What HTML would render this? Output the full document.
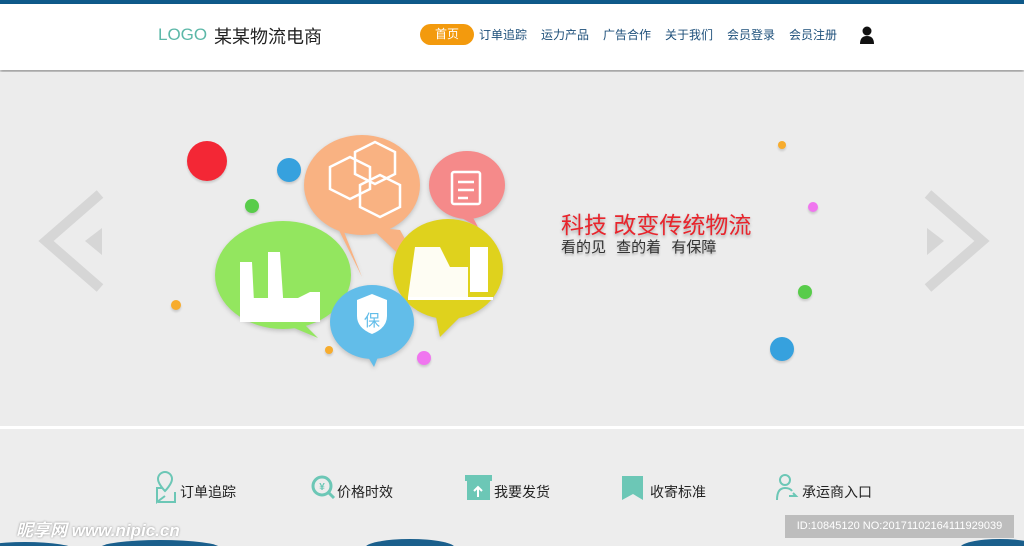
<!DOCTYPE html>
<html><head><meta charset="utf-8"><style>
*{margin:0;padding:0;box-sizing:border-box}
body{width:1024px;height:546px;overflow:hidden;background:#ededed;font-family:"Liberation Sans","Noto Sans CJK SC",sans-serif;position:relative}
.top{position:absolute;left:0;top:0;width:1024px;height:4px;background:#0f5a8a}
.hdr{position:absolute;left:0;top:4px;width:1024px;height:66px;background:#fff;box-shadow:0 2px 3px rgba(0,0,0,.35)}
.logo{position:absolute;left:158px;top:21px;font-size:17px;color:#5cb8a8}
.brand{position:absolute;left:214px;top:19px;font-size:18px;color:#222}
.nav{position:absolute;top:22px;font-size:12px;color:#1d4f7a}
.home{position:absolute;left:420px;top:20px;width:54px;height:21px;border-radius:11px;background:#f39a0d;color:#fff;font-size:12px;text-align:center;line-height:21px}
.banner{position:absolute;left:0;top:72px;width:1024px;height:354px;background:#ececec}
.line{position:absolute;left:0;top:426px;width:1024px;height:3px;background:#fff}
.dot{position:absolute;border-radius:50%;box-shadow:0 2px 2px rgba(0,0,0,.15)}
.t1{position:absolute;left:561px;top:206px;font-size:23px;color:#e8242c;text-shadow:0 2px 3px rgba(0,0,0,.3)}
.t2{position:absolute;left:561px;top:236px;font-size:15px;color:#333;text-shadow:0 2px 2px rgba(0,0,0,.25);word-spacing:6px}
.fi{position:absolute;top:482px;font-size:14px;color:#222}
.wm{position:absolute;left:785px;top:515px;width:229px;height:23px;background:#bdbdbd;color:#fff;font-size:11px;line-height:23px;text-align:center}
.nip{position:absolute;left:16px;top:516px;font-size:17px;font-weight:bold;font-style:italic;color:#fff;text-shadow:0 0 2px #888}
</style></head><body>
<div class="top"></div>
<div class="hdr">
<div class="logo">LOGO</div><div class="brand">某某物流电商</div>
<div class="home">首页</div>
<div class="nav" style="left:479px">订单追踪</div>
<div class="nav" style="left:541px">运力产品</div>
<div class="nav" style="left:603px">广告合作</div>
<div class="nav" style="left:665px">关于我们</div>
<div class="nav" style="left:727px">会员登录</div>
<div class="nav" style="left:789px">会员注册</div>
<svg style="position:absolute;left:859px;top:22px" width="16" height="18"><circle cx="8" cy="5" r="4.5" fill="#111"/><path d="M1 18 Q1 10 8 10 Q15 10 15 18Z" fill="#111"/></svg>
</div>
<div class="banner"></div>
<svg style="position:absolute;left:0;top:72px" width="1024" height="354">
<g fill="none" stroke="#d6d6d6" stroke-width="10"><path d="M100 122 L46 169 L100 216"/><path d="M928 122 L982 169 L928 216"/></g>
<g fill="#d6d6d6"><path d="M85 169 L102 156 L102 183Z"/><path d="M944 169 L927 156 L927 183Z"/></g>
<g style="filter:drop-shadow(0 2px 2px rgba(0,0,0,.18))">
<path d="M330 140 L362 205 L340 150Z" fill="#f9b282"/>
<ellipse cx="362" cy="113" rx="58" ry="50" fill="#f9b282"/>
<path d="M370 155 L430 212 L400 158Z" fill="#f9b282"/>
<ellipse cx="467" cy="113" rx="38" ry="34" fill="#f58a8a"/>
<path d="M470 140 L478 155 L458 144Z" fill="#f58a8a"/>
<ellipse cx="283" cy="203" rx="68" ry="54" fill="#93e65f"/>
<path d="M280 250 L318 266 L300 248Z" fill="#93e65f"/>
<ellipse cx="448" cy="197" rx="55" ry="50" fill="#dfd21d"/>
<path d="M435 240 L440 265 L465 240Z" fill="#dfd21d"/>
<ellipse cx="372" cy="250" rx="42" ry="37" fill="#62bde9"/>
<path d="M365 280 L374 295 L380 280Z" fill="#62bde9"/>
</g>
<g fill="none" stroke="#fff" stroke-width="2.5">
<path d="M330 95 l20 -10 l20 10 l0 22 l-20 10 l-20 -10z M355 80 l20 -10 l20 10 l0 22 l-20 10 l-20 -10z M360 113 l20 -10 l20 10 l0 22 l-20 10 l-20 -10z"/>
<rect x="452" y="100" width="28" height="32" rx="2"/><path d="M458 110h16M458 118h16M458 126h10"/>
</g>
<g fill="#fff">
<path d="M240 190h12l3 60h-15zM268 180h12l4 60h-16zM250 250l60 -30h10v30z" />
<rect x="240" y="226" width="80" height="24"/>
<path d="M415 175h25l10 20h18v30h-60z" opacity=".95"/><rect x="470" y="175" width="18" height="45"/><rect x="408" y="225" width="85" height="3"/>
<path d="M357 228l15 -6 15 6v16q0 12 -15 18q-15 -6 -15 -18z"/>
</g>
<text x="372" y="254" font-size="16" fill="#62bde9" text-anchor="middle" font-family="Noto Sans CJK SC">保</text>
</svg>
<div class="dot" style="left:187px;top:141px;width:40px;height:40px;background:#f32735"></div>
<div class="dot" style="left:277px;top:158px;width:24px;height:24px;background:#36a1de"></div>
<div class="dot" style="left:245px;top:199px;width:14px;height:14px;background:#58cc4a"></div>
<div class="dot" style="left:171px;top:300px;width:10px;height:10px;background:#f7ac2d"></div>
<div class="dot" style="left:325px;top:346px;width:8px;height:8px;background:#f7ac2d"></div>
<div class="dot" style="left:417px;top:351px;width:14px;height:14px;background:#f076ef"></div>
<div class="dot" style="left:778px;top:141px;width:8px;height:8px;background:#f7ac2d"></div>
<div class="dot" style="left:808px;top:202px;width:10px;height:10px;background:#f076ef"></div>
<div class="dot" style="left:798px;top:285px;width:14px;height:14px;background:#58cc4a"></div>
<div class="dot" style="left:770px;top:337px;width:24px;height:24px;background:#36a1de"></div>
<div class="t1">科技 改变传统物流</div>
<div class="t2">看的见 查的着 有保障</div>
<div class="line"></div>
<svg style="position:absolute;left:0;top:470px" width="1024" height="40">
<g fill="none" stroke="#6cc7b6" stroke-width="2"><path d="M165 26l-8 6v-14h6M165 2a7 7 0 0 1 7 7c0 5 -7 12 -7 12s-7 -7 -7 -12a7 7 0 0 1 7 -7z M175 22v10h-17"/>
<circle cx="322" cy="16" r="9" stroke-width="3"/><path d="M329 23l5 5" stroke-width="3"/>
<circle cx="785" cy="10" r="5"/><path d="M777 30q0 -12 8 -12q5 0 7 3M789 26h7l-3 -3"/></g>
<g fill="#6cc7b6"><rect x="467" y="10" width="23" height="20"/><rect x="465" y="5" width="27" height="6"/>
<path d="M622 6h21v24l-10 -6l-11 6z"/></g>
<path d="M478 27v-9M474 21l4 -4l4 4" stroke="#fff" stroke-width="2" fill="none"/>
<text x="322" y="20" font-size="10" fill="#6cc7b6" text-anchor="middle" font-weight="bold">¥</text>
</svg>
<div class="fi" style="left:180px">订单追踪</div>
<div class="fi" style="left:337px">价格时效</div>
<div class="fi" style="left:494px">我要发货</div>
<div class="fi" style="left:650px">收寄标准</div>
<div class="fi" style="left:802px">承运商入口</div>
<svg style="position:absolute;left:0;top:536px" width="1024" height="10"><g fill="#1a5f8c"><ellipse cx="160" cy="12" rx="60" ry="8"/><ellipse cx="410" cy="12" rx="45" ry="9"/><ellipse cx="1000" cy="12" rx="40" ry="9"/><ellipse cx="25" cy="14" rx="50" ry="8"/></g></svg>
<div class="nip">昵享网 www.nipic.cn</div>
<div class="wm">ID:10845120 NO:20171102164111929039</div>
</body></html>
